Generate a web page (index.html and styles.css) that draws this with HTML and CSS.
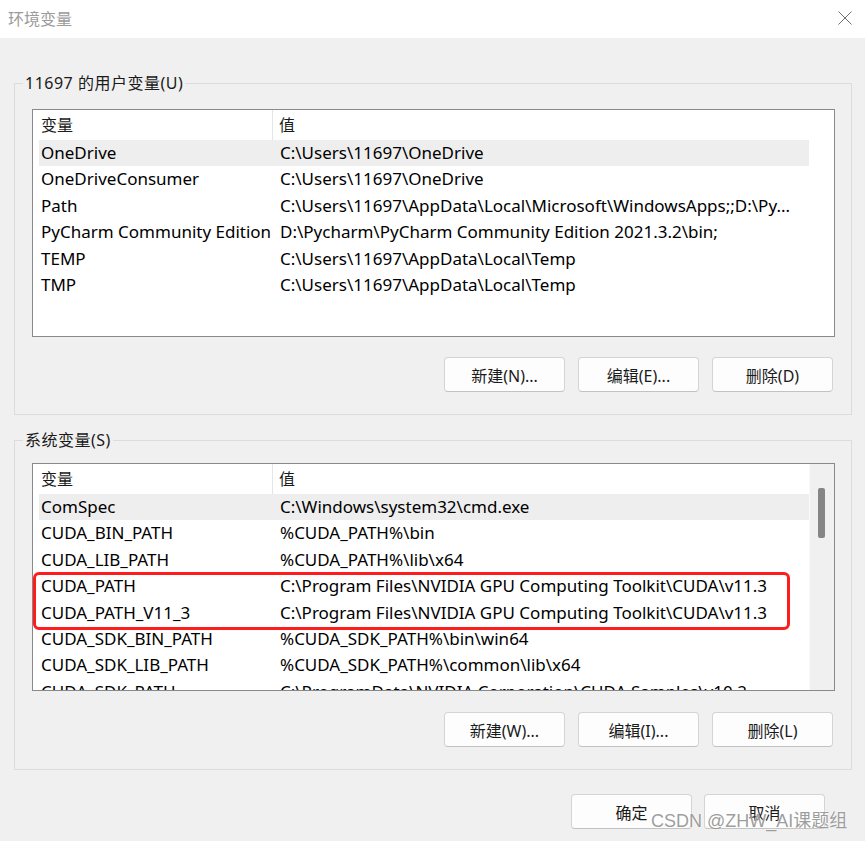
FILE: index.html
```html
<!DOCTYPE html>
<html lang="zh-CN">
<head>
<meta charset="utf-8">
<title>环境变量</title>
<link rel="stylesheet" href="styles.css">
</head>
<body>
<div class="window">
  <header class="titlebar">
    <span class="title">环境变量</span>
    <svg class="close" viewBox="0 0 14 14" width="14" height="14" aria-hidden="true"><path d="M0.5 0.5L13.5 13.5M13.5 0.5L0.5 13.5"/></svg>
  </header>
  <main class="content">
    <fieldset class="group group-user">
      <legend>11697 的用户变量(U)</legend>
      <div class="list">
        <div class="list-main">
          <div class="list-head"><span class="h-name">变量</span><span class="h-value">值</span></div>
          <div class="rows">
            <div class="row selected"><span class="c-name">OneDrive</span><span class="c-value">C:\Users\11697\OneDrive</span></div>
            <div class="row"><span class="c-name">OneDriveConsumer</span><span class="c-value">C:\Users\11697\OneDrive</span></div>
            <div class="row"><span class="c-name">Path</span><span class="c-value">C:\Users\11697\AppData\Local\Microsoft\WindowsApps;;D:\Py...</span></div>
            <div class="row"><span class="c-name">PyCharm Community Edition</span><span class="c-value">D:\Pycharm\PyCharm Community Edition 2021.3.2\bin;</span></div>
            <div class="row"><span class="c-name">TEMP</span><span class="c-value">C:\Users\11697\AppData\Local\Temp</span></div>
            <div class="row"><span class="c-name">TMP</span><span class="c-value">C:\Users\11697\AppData\Local\Temp</span></div>
          </div>
        </div>
      </div>
      <div class="buttons">
        <button class="btn">新建(N)...</button>
        <button class="btn">编辑(E)...</button>
        <button class="btn">删除(D)</button>
      </div>
    </fieldset>

    <fieldset class="group group-system">
      <legend>系统变量(S)</legend>
      <div class="list">
        <div class="list-main">
          <div class="list-head"><span class="h-name">变量</span><span class="h-value">值</span></div>
          <div class="rows">
            <div class="row selected"><span class="c-name">ComSpec</span><span class="c-value">C:\Windows\system32\cmd.exe</span></div>
            <div class="row"><span class="c-name">CUDA_BIN_PATH</span><span class="c-value">%CUDA_PATH%\bin</span></div>
            <div class="row"><span class="c-name">CUDA_LIB_PATH</span><span class="c-value">%CUDA_PATH%\lib\x64</span></div>
            <div class="row"><span class="c-name">CUDA_PATH</span><span class="c-value">C:\Program Files\NVIDIA GPU Computing Toolkit\CUDA\v11.3</span></div>
            <div class="row"><span class="c-name">CUDA_PATH_V11_3</span><span class="c-value">C:\Program Files\NVIDIA GPU Computing Toolkit\CUDA\v11.3</span></div>
            <div class="row"><span class="c-name">CUDA_SDK_BIN_PATH</span><span class="c-value">%CUDA_SDK_PATH%\bin\win64</span></div>
            <div class="row"><span class="c-name">CUDA_SDK_LIB_PATH</span><span class="c-value">%CUDA_SDK_PATH%\common\lib\x64</span></div>
            <div class="row"><span class="c-name">CUDA_SDK_PATH</span><span class="c-value">C:\ProgramData\NVIDIA Corporation\CUDA Samples\v10.2</span></div>
          </div>
        </div>
        <div class="scrollbar"><div class="thumb"></div></div>
        <div class="highlight"></div>
      </div>
      <div class="buttons">
        <button class="btn">新建(W)...</button>
        <button class="btn">编辑(I)...</button>
        <button class="btn">删除(L)</button>
      </div>
    </fieldset>

    <div class="dialog-buttons">
      <button class="btn">确定</button>
      <button class="btn">取消</button>
    </div>
  </main>
  <div class="watermark">CSDN @ZHW_AI课题组</div>
</div>
</body>
</html>
```
FILE: styles.css
```css
html, body {
  margin: 0;
  padding: 0;
}

body {
  background: #f0f0f0;
  font-family: "Noto Sans", "Noto Sans CJK SC", sans-serif;
  font-size: 16px;
  color: #000;
}

.window {
  position: relative;
  width: 865px;
  height: 841px;
  overflow: hidden;
  background: #f0f0f0;
}

.titlebar {
  height: 38px;
  background: #fff;
  display: flex;
  align-items: center;
  justify-content: space-between;
  padding: 0 13px 0 8px;
  box-sizing: border-box;
}

.title {
  color: #9b9b9b;
  font-size: 16px;
  line-height: 20px;
}

.close {
  fill: none;
  stroke: #6e6e6e;
  stroke-width: 1;
  margin-top: -2px;
}

.content {
  padding: 0 13px 0 14px;
}

.group {
  margin: 0;
  width: 838px;
  box-sizing: border-box;
  min-width: 0;
  border: 1px solid #dcdcdc;
  padding: 0 16px 22px 17px;
}

.group legend {
  margin-left: -9px;
  padding: 0 2px;
  font-size: 16px;
  line-height: 22px;
  letter-spacing: 0.5px;
  color: #1a1a1a;
}

.group-user {
  margin-top: 34px;
  padding-top: 15px;
}

.group-system {
  margin-top: 14px;
  padding-top: 12px;
  padding-bottom: 22px;
}

.list {
  position: relative;
  height: 228px;
  box-sizing: border-box;
  border: 1px solid #868a8e;
  background: #fff;
  display: flex;
  overflow: hidden;
}

.list-main {
  width: 776px;
  flex: none;
}

.list-head {
  height: 30px;
  display: grid;
  grid-template-columns: 240px 1fr;
  line-height: 30px;
  color: #1a1a1a;
}

.h-name {
  padding-left: 8px;
  border-right: 1px solid #e5e5e5;
}

.h-value {
  padding-left: 6px;
}

.rows {
  padding-left: 6px;
}

.row {
  height: 26.4px;
  line-height: 26.4px;
  display: grid;
  grid-template-columns: 234px 1fr;
  white-space: nowrap;
  font-size: 17px;
}

.row.selected {
  background: #eeeeee;
}

.c-name {
  padding-left: 2px;
  overflow: hidden;
}

.c-value {
  padding-left: 7px;
  overflow: hidden;
}

.scrollbar {
  flex: 1;
  background: #f0f0f0;
  border-left: 1px solid #fafafa;
  padding: 24px 0 0 8px;
}

.thumb {
  width: 7px;
  height: 50px;
  background: #858585;
  border-radius: 2px;
}

.highlight {
  position: absolute;
  left: 0;
  top: 108px;
  width: 757px;
  height: 58px;
  box-sizing: border-box;
  border: 3px solid #ff1c1c;
  border-radius: 6px;
  pointer-events: none;
}

.buttons {
  display: flex;
  justify-content: flex-end;
  gap: 13px;
  margin-top: 20px;
  padding-right: 2px;
}

.group-system .buttons {
  margin-top: 21px;
}

.btn {
  width: 121px;
  height: 35px;
  box-sizing: border-box;
  background: #fdfdfd;
  border: 1px solid #d4d4d4;
  border-bottom-color: #c2c2c2;
  border-radius: 4px;
  font-family: "Noto Sans", "Noto Sans CJK SC", sans-serif;
  font-size: 16px;
  color: #1a1a1a;
  padding: 0;
}

.dialog-buttons {
  display: flex;
  justify-content: flex-end;
  gap: 12px;
  margin-top: 24px;
  padding-right: 27px;
}

.watermark {
  position: absolute;
  left: 651px;
  top: 809px;
  font-family: "Liberation Sans", "Noto Sans CJK SC", sans-serif;
  font-size: 18px;
  line-height: 24px;
  color: rgba(140, 140, 140, 0.85);
  text-shadow: 0 0 2px #fff;
  white-space: nowrap;
}
```
